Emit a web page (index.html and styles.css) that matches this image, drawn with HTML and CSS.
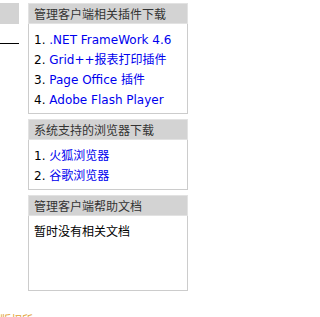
FILE: index.html
```html
<!DOCTYPE html>
<html>
<head>
<meta charset="utf-8">
<link rel="stylesheet" href="styles.css">
</head>
<body>
<div class="page">
  <div class="left">
    <div class="left-head"></div>
    <div class="left-line"></div>
  </div>
  <div class="right">
    <div class="box">
      <div class="box-head">管理客户端相关插件下载</div>
      <div class="box-body">
        <div class="item">1. <a href="#">.NET FrameWork 4.6</a></div>
        <div class="item">2. <a href="#">Grid++报表打印插件</a></div>
        <div class="item">3. <a href="#">Page Office 插件</a></div>
        <div class="item">4. <a href="#">Adobe Flash Player</a></div>
      </div>
    </div>
    <div class="box">
      <div class="box-head">系统支持的浏览器下载</div>
      <div class="box-body">
        <div class="item">1. <a href="#">火狐浏览器</a></div>
        <div class="item">2. <a href="#">谷歌浏览器</a></div>
      </div>
    </div>
    <div class="box">
      <div class="box-head">管理客户端帮助文档</div>
      <div class="box-body tall">
        <div class="item">暂时没有相关文档</div>
      </div>
    </div>
  </div>
</div>
<div class="footer">版权所</div>
</body>
</html>
```
FILE: styles.css
```css
html, body {
  margin: 0;
  padding: 0;
  background: #fff;
}
body {
  font-family: "DejaVu Sans", "Noto Sans CJK SC", sans-serif;
  font-size: 12px;
  color: #000;
}
.page {
  display: flex;
  gap: 9px;
  padding-top: 3px;
}
.left {
  width: 19px;
  flex: none;
}
.left-head {
  height: 21px;
  background: #d3d3d3;
}
.left-line {
  margin-top: 19px;
  height: 1px;
  background: #000;
}
.right {
  width: 160px;
  flex: none;
  display: flex;
  flex-direction: column;
  gap: 5px;
}
.box-head {
  height: 19px;
  line-height: 19px;
  background: #d3d3d3;
  border: 1px solid #e2e2e2;
  padding-left: 5px;
  font-family: "Noto Sans CJK SC", sans-serif;
  font-size: 12px;
  color: #333;
}
.box-body {
  border: 1px solid #cccccc;
  border-top: none;
  padding: 6px 5px 3px;
}
.box-body.tall {
  height: 65px;
}
.item {
  line-height: 20px;
  white-space: nowrap;
}
.item a {
  color: #0000ee;
  text-decoration: none;
}
.footer {
  margin-top: 23px;
  font-size: 11px;
  color: #e0a030;
  line-height: 14px;
}
```
